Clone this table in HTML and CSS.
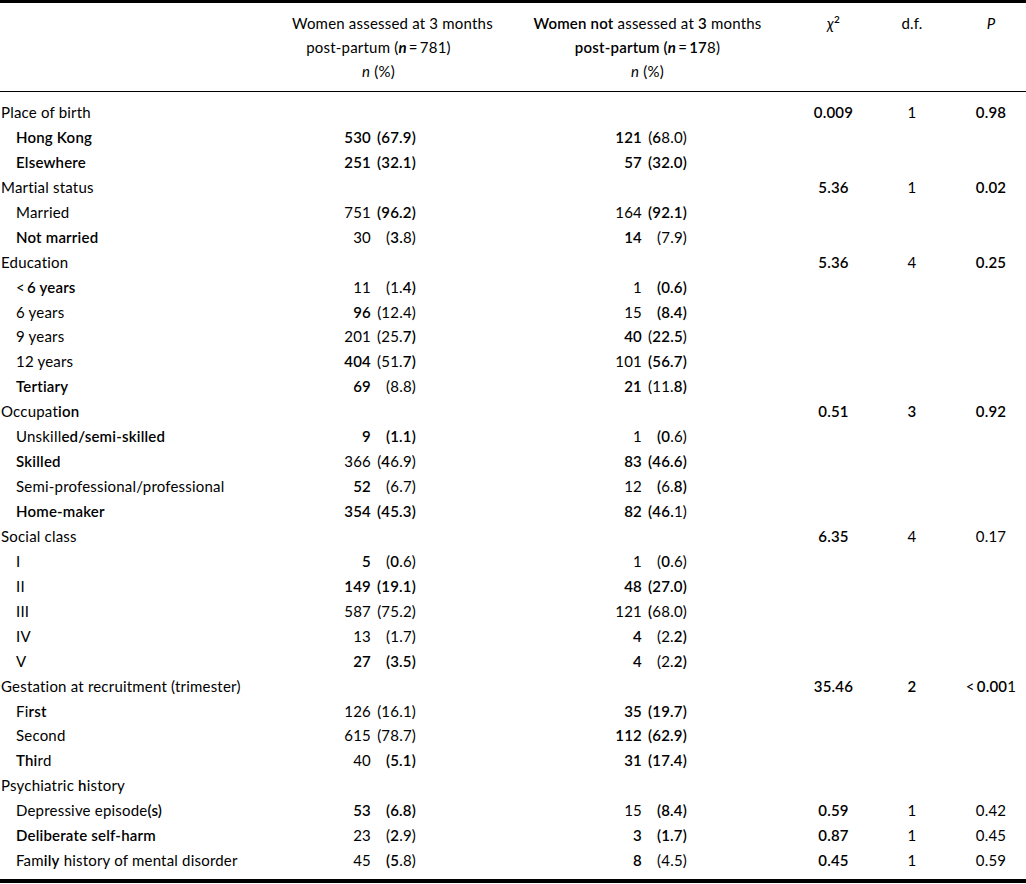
FILE: index.html
```html
<!DOCTYPE html>
<html lang="en">
<head>
<meta charset="utf-8">
<title>Table</title>
<link rel="stylesheet" href="styles.css">
</head>
<body>
<table class="tbl">
  <colgroup>
    <col class="c-label">
    <col class="c-a">
    <col class="c-b">
    <col class="c-chi">
    <col class="c-df">
    <col class="c-p">
  </colgroup>
  <thead>
    <tr>
      <th class="h-label"></th>
      <th class="h-a">Women assessed at 3 months<br>post-partum (<i class="nb">n</i>&thinsp;=&thinsp;781)<br><i>n</i> (%)</th>
      <th class="h-b"><b>Women not</b> assessed at <b>3</b> months<br><b>post-partum (</b><i class="nb">n</i>&thinsp;=&thinsp;<b>17</b>8)<br><i>n</i> (%)</th>
      <th class="h-chi"><i>χ</i><sup><b>2</b></sup></th>
      <th class="h-df">d.f.</th>
      <th class="h-p"><i>P</i></th>
    </tr>
  </thead>
  <tbody>
    <tr class="first"><td class="cat">Place of birth</td><td class="d"></td><td class="d2"></td><td class="s"><b>0.009</b></td><td class="s">1</td><td class="s sp"><b>0.98</b></td></tr>
    <tr><td class="sub"><b>Hong Kong</b></td><td class="d"><b>530</b><span class="pct"><b>(67.9)</b></span></td><td class="d2"><b>121</b><span class="pct">(<b>6</b>8.0)</span></td><td></td><td></td><td></td></tr>
    <tr><td class="sub"><b>Elsewhere</b></td><td class="d"><b>251</b><span class="pct"><b>(32.1)</b></span></td><td class="d2"><b>57</b><span class="pct"><b>(32.0)</b></span></td><td></td><td></td><td></td></tr>
    <tr><td class="cat">Martial status</td><td class="d"></td><td class="d2"></td><td class="s"><b>5.36</b></td><td class="s">1</td><td class="s sp"><b>0.02</b></td></tr>
    <tr><td class="sub">Married</td><td class="d">751<span class="pct"><b>(96.2)</b></span></td><td class="d2">164<span class="pct"><b>(92.1)</b></span></td><td></td><td></td><td></td></tr>
    <tr><td class="sub"><b>Not married</b></td><td class="d">30<span class="pct">(<b>3.</b>8)</span></td><td class="d2"><b>14</b><span class="pct">(7.9)</span></td><td></td><td></td><td></td></tr>
    <tr><td class="cat">Education</td><td class="d"></td><td class="d2"></td><td class="s"><b>5.36</b></td><td class="s">4</td><td class="s sp"><b>0.25</b></td></tr>
    <tr><td class="sub">&lt;&thinsp;<b>6 years</b></td><td class="d">11<span class="pct">(1.<b>4)</b></span></td><td class="d2">1<span class="pct"><b>(0.6)</b></span></td><td></td><td></td><td></td></tr>
    <tr><td class="sub">6 years</td><td class="d"><b>96</b><span class="pct">(12.4)</span></td><td class="d2">15<span class="pct"><b>(8.4)</b></span></td><td></td><td></td><td></td></tr>
    <tr><td class="sub">9 years</td><td class="d">201<span class="pct">(25.<b>7)</b></span></td><td class="d2"><b>40</b><span class="pct">(<b>22.5</b>)</span></td><td></td><td></td><td></td></tr>
    <tr><td class="sub">12 years</td><td class="d"><b>404</b><span class="pct">(51.<b>7)</b></span></td><td class="d2">101<span class="pct"><b>(56.7)</b></span></td><td></td><td></td><td></td></tr>
    <tr><td class="sub"><b>Tertiary</b></td><td class="d"><b>69</b><span class="pct">(8.8)</span></td><td class="d2"><b>21</b><span class="pct">(11.<b>8)</b></span></td><td></td><td></td><td></td></tr>
    <tr><td class="cat">Occupat<b>ion</b></td><td class="d"></td><td class="d2"></td><td class="s"><b>0.51</b></td><td class="s"><b>3</b></td><td class="s sp"><b>0.92</b></td></tr>
    <tr><td class="sub">Unskill<b>ed/semi-skilled</b></td><td class="d"><b>9</b><span class="pct"><b>(1.1)</b></span></td><td class="d2">1<span class="pct"><b>(0</b>.6)</span></td><td></td><td></td><td></td></tr>
    <tr><td class="sub"><b>Skilled</b></td><td class="d">366<span class="pct">(<b>4</b>6.9)</span></td><td class="d2"><b>83</b><span class="pct"><b>(46.6)</b></span></td><td></td><td></td><td></td></tr>
    <tr><td class="sub">Semi-professional/professional</td><td class="d"><b>52</b><span class="pct">(6.7)</span></td><td class="d2">12<span class="pct"><b>(</b>6.<b>8)</b></span></td><td></td><td></td><td></td></tr>
    <tr><td class="sub"><b>Home-maker</b></td><td class="d"><b>354</b><span class="pct"><b>(45.3)</b></span></td><td class="d2"><b>82</b><span class="pct"><b>(46.</b>1)</span></td><td></td><td></td><td></td></tr>
    <tr><td class="cat">Social class</td><td class="d"></td><td class="d2"></td><td class="s"><b>6.35</b></td><td class="s">4</td><td class="s sp">0.17</td></tr>
    <tr><td class="sub">I</td><td class="d"><b>5</b><span class="pct">(<b>0</b>.6)</span></td><td class="d2">1<span class="pct">(<b>0</b>.6)</span></td><td></td><td></td><td></td></tr>
    <tr><td class="sub">II</td><td class="d"><b>149</b><span class="pct"><b>(19.1)</b></span></td><td class="d2"><b>48</b><span class="pct"><b>(27.0)</b></span></td><td></td><td></td><td></td></tr>
    <tr><td class="sub">III</td><td class="d">587<span class="pct">(75.2)</span></td><td class="d2">121<span class="pct"><b>(</b>68.0)</span></td><td></td><td></td><td></td></tr>
    <tr><td class="sub">IV</td><td class="d">13<span class="pct">(1.7)</span></td><td class="d2"><b>4</b><span class="pct">(2.<b>2)</b></span></td><td></td><td></td><td></td></tr>
    <tr><td class="sub">V</td><td class="d"><b>27</b><span class="pct"><b>(3.5)</b></span></td><td class="d2"><b>4</b><span class="pct">(2.<b>2)</b></span></td><td></td><td></td><td></td></tr>
    <tr><td class="cat">Gestation at recruitment (trimester)</td><td class="d"></td><td class="d2"></td><td class="s"><b>35.46</b></td><td class="s"><b>2</b></td><td class="s sp">&lt;&thinsp;<b>0.00</b>1</td></tr>
    <tr><td class="sub">Fi<b>rst</b></td><td class="d">126<span class="pct">(16.1)</span></td><td class="d2"><b>35</b><span class="pct"><b>(19.7)</b></span></td><td></td><td></td><td></td></tr>
    <tr><td class="sub">Second</td><td class="d">615<span class="pct">(78.7)</span></td><td class="d2"><b>112</b><span class="pct"><b>(62.9)</b></span></td><td></td><td></td><td></td></tr>
    <tr><td class="sub"><b>Thi</b>rd</td><td class="d">40<span class="pct"><b>(5.1)</b></span></td><td class="d2"><b>31</b><span class="pct"><b>(17.4)</b></span></td><td></td><td></td><td></td></tr>
    <tr><td class="cat">Psychiatric <b>h</b>istory</td><td class="d"></td><td class="d2"></td><td></td><td></td><td></td></tr>
    <tr><td class="sub">Depressive episode<b>(s)</b></td><td class="d"><b>53</b><span class="pct"><b>(6.8)</b></span></td><td class="d2">15<span class="pct"><b>(8.4)</b></span></td><td class="s"><b>0.59</b></td><td class="s">1</td><td class="s sp">0.42</td></tr>
    <tr><td class="sub"><b>Deliberate self-harm</b></td><td class="d">23<span class="pct">(<b>2</b>.9)</span></td><td class="d2"><b>3</b><span class="pct"><b>(1.7)</b></span></td><td class="s"><b>0.87</b></td><td class="s">1</td><td class="s sp">0.45</td></tr>
    <tr class="last"><td class="sub">Fam<b>ily</b> history of mental disorder</td><td class="d">45<span class="pct"><b>(5</b>.8)</span></td><td class="d2"><b>8</b><span class="pct">(4.5)</span></td><td class="s"><b>0.45</b></td><td class="s">1</td><td class="s sp">0.59</td></tr>
  </tbody>
</table>
</body>
</html>
```

FILE: styles.css
```css
html, body {
  margin: 0;
  padding: 0;
  background: #fff;
}

body {
  font-family: "Lato", "Liberation Sans", sans-serif;
  font-size: 15px;
  letter-spacing: 0.2px;
  color: #000;
}

.tbl {
  width: 1026px;
  border-collapse: collapse;
  table-layout: fixed;
  border-top: 3px solid #000;
  border-bottom: 4px solid #000;
}

.c-label { width: 280px; }
.c-a { width: 185px; }
.c-b { width: 330px; }
.c-chi { width: 77px; }
.c-df { width: 80px; }
.c-p { width: 74px; }

b { font-weight: 600; }

.tbl thead th {
  font-weight: 400;
  line-height: 24px;
  height: 72px;
  padding: 8px 0;
  vertical-align: top;
  text-align: center;
  white-space: nowrap;
  border-bottom: 1px solid #000;
}

.tbl thead .h-a { padding-left: 12px; }
.tbl thead .h-b { padding-left: 35px; }
.tbl thead .h-p { padding-left: 4px; }

.nb { font-weight: 700; }

sup {
  font-size: 10px;
  line-height: 0;
  vertical-align: 6px;
}

.tbl tbody td {
  height: 24.93px;
  padding: 0;
  line-height: 24.93px;
  white-space: nowrap;
}

.tbl tbody tr.first td { padding-top: 8px; }
.tbl tbody tr.last td { padding-bottom: 6px; }

.tbl tbody td.cat { padding-left: 1px; }
.tbl tbody td.sub { padding-left: 16px; }

.tbl tbody td.d { text-align: right; padding-right: 49px; }
.tbl tbody td.d2 { text-align: right; padding-right: 108px; }

.pct {
  display: inline-block;
  width: 45px;
  text-align: right;
}

.s { text-align: center; }
.tbl tbody td.sp { padding-left: 4px; }
```
